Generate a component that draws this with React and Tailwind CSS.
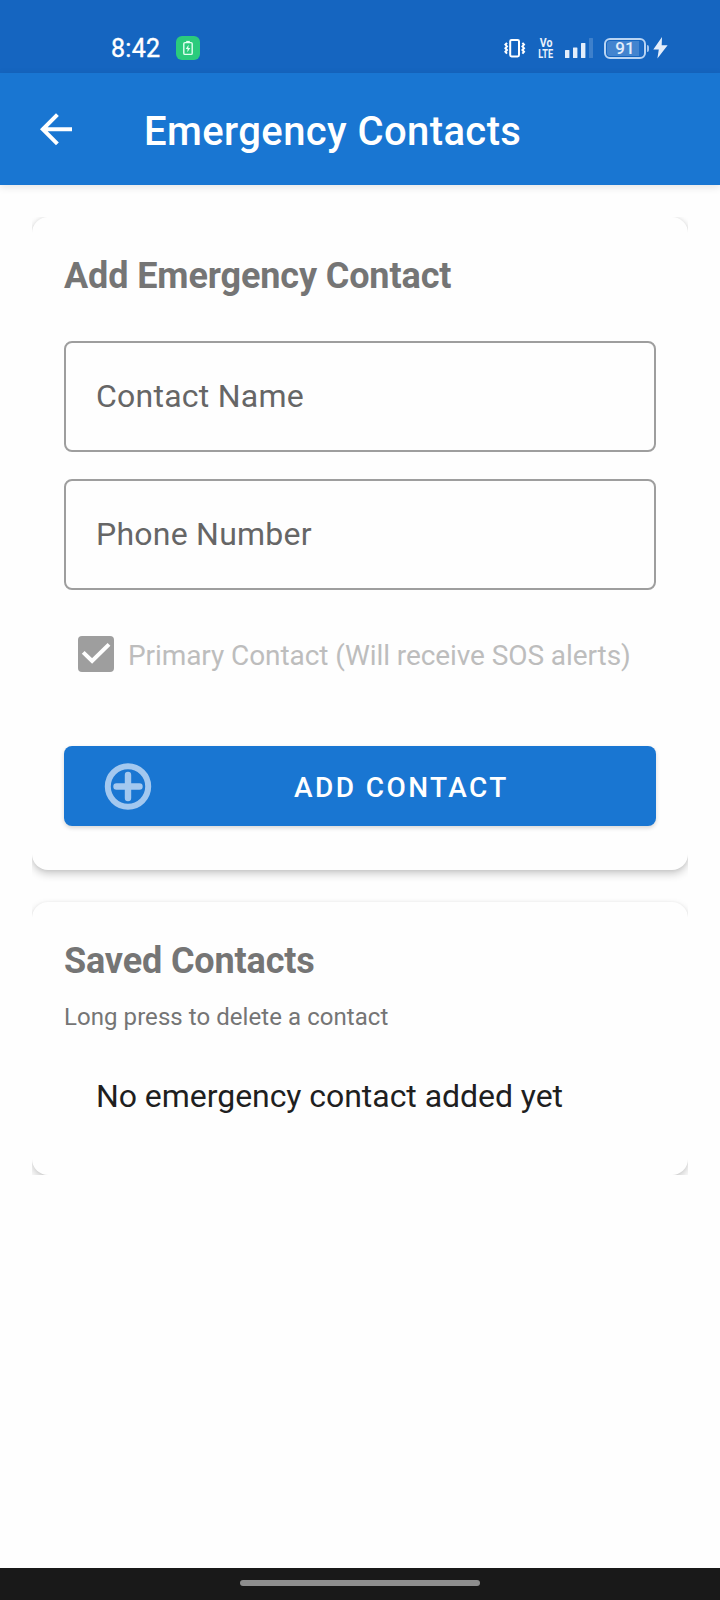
function VibrateIcon() {
  return (
    <svg className="h-5 w-[22px] shrink-0" viewBox="0 0 22 20" fill="none" stroke="#fff">
      <rect x="6.2" y="1.9" width="8.8" height="16.6" rx="1.4" strokeWidth="2" />
      <path d="M3 4.8L1.4 6.6 3 8.4 1.4 10.2 3 12l-1.6 1.8L3 15.6" strokeWidth="2" />
      <path d="M18.4 4.8L20 6.6 18.4 8.4 20 10.2 18.4 12l1.6 1.8-1.6 1.8" strokeWidth="2" />
    </svg>
  );
}

function SignalIcon() {
  return (
    <svg className="h-5 w-7 shrink-0" viewBox="0 0 28 20" fill="#e4eefb">
      <rect x="0" y="12" width="4.4" height="8" rx="0.5" />
      <rect x="8" y="9.6" width="4.4" height="10.4" rx="0.5" />
      <rect x="16" y="5" width="4.4" height="15" rx="0.5" />
      <rect x="24" y="0" width="4" height="20" rx="0.5" fillOpacity="0.2" />
    </svg>
  );
}

function StatusBar() {
  return (
    <div className="flex h-[73px] items-start bg-[#1565c0] pt-9 pr-[52px] pl-[111px]">
      <span className="w-[65px] pt-px text-[25px] leading-6 tracking-[0.3px] text-white [-webkit-text-stroke:0.4px_#fff]">
        8:42
      </span>
      <span className="flex h-6 w-6 items-center justify-center rounded-[6px] bg-[#2bcb7c]">
        <svg className="h-4 w-3" viewBox="0 0 12 16" fill="none" stroke="#e3fff0">
          <rect x="1.8" y="2.6" width="8.4" height="11.8" rx="1.2" strokeWidth="1.4" />
          <path d="M4.2 1.6h3.6" strokeWidth="1.4" />
          <path d="M6.6 4.8L3.7 9h1.9l-.3 3.2L8.3 8H6.3z" fill="#e3fff0" stroke="none" />
        </svg>
      </span>
      <div className="ml-auto flex h-6 items-center">
        <VibrateIcon />
        <span className="ml-3 flex w-4 flex-col items-center pt-px text-[12px] leading-[10.5px] font-bold text-[#eaf2fc]">
          <span className="scale-x-[0.88]">Vo</span>
          <span className="scale-x-[0.76]">LTE</span>
        </span>
        <div className="ml-[11px]">
          <SignalIcon />
        </div>
        <span className="ml-[11px] flex h-[21px] w-[42px] items-center justify-center rounded-[6px] border-2 border-[#b9d4f3] p-[1px]">
          <span className="flex h-full w-full items-center justify-center rounded-[3px] bg-linear-to-r from-[#4384cf] from-90% to-[#1f6bc4] to-90% text-[17px] leading-none font-medium text-[#e4eefb]">
            91
          </span>
        </span>
        <span className="ml-px h-[7px] w-[2px] rounded-r-sm bg-[#a3c5ee]" />
        <svg className="ml-1 h-[22px] w-[15px]" viewBox="0 0 15 22" fill="#e4eefb">
          <path d="M9 0L.3 12.4h5.5l-1.4 9L14.6 8.2H8.7z" />
        </svg>
      </div>
    </div>
  );
}

function Toolbar() {
  return (
    <header className="relative z-10 flex h-28 items-center bg-[#1976d2] pl-8 shadow-[0_2px_8px_rgba(0,0,0,0.11)]">
      <svg className="h-12 w-12" viewBox="0 0 24 24" fill="#fff">
        <path d="M20 11.1H7.83l5.59-5.59L12 4.1l-8 8 8 8 1.41-1.41L7.83 13.1H20v-2z" />
      </svg>
      <h1 className="ml-16 pt-[5px] text-[40px] leading-[48px] font-medium tracking-[0.4px] text-white">
        Emergency Contacts
      </h1>
    </header>
  );
}

function Field({ label }) {
  return (
    <div className="flex h-[111px] items-center rounded-lg border-2 border-[#9e9e9e] px-[30px] pb-[2px] text-[32px] leading-[38px] tracking-[0.24px] text-[#666]">
      {label}
    </div>
  );
}

function Card({ className, children }) {
  return <section className={`flex flex-col rounded-2xl bg-[#fefefe] px-8 ${className}`}>{children}</section>;
}

export default function App() {
  return (
    <div className="flex h-[1600px] w-[720px] flex-col bg-[#fefefe] font-[Roboto,sans-serif]">
      <StatusBar />
      <Toolbar />
      <main className="flex-1 px-8 pt-8">
        <div className="flex flex-col gap-8 overflow-hidden">
          <Card className="h-[653px] pt-[38px] shadow-[0_4px_8px_rgba(0,0,0,0.2),0_0_4px_rgba(0,0,0,0.09)]">
            <h2 className="text-[36px] leading-[42px] font-bold tracking-[-0.12px] text-[#757575]">
              Add Emergency Contact
            </h2>
            <div className="mt-11 flex flex-col gap-[27px]">
              <Field label="Contact Name" />
              <Field label="Phone Number" />
            </div>
            <div className="mt-[46px] flex h-9 items-center pl-[14px]">
              <span className="flex h-9 w-9 items-center justify-center rounded-[4px] bg-[#9e9e9e]">
                <svg className="h-9 w-9" viewBox="0 0 36 36" fill="none" stroke="#fff" strokeWidth="4">
                  <path d="M5.2 16.4l8.9 8.6L31 8.4" />
                </svg>
              </span>
              <span className="ml-[14px] pt-[3px] text-[28px] leading-8 tracking-[-0.08px] whitespace-nowrap text-[#bdbdbd]">
                Primary Contact (Will receive SOS alerts)
              </span>
            </div>
            <button className="mt-[74px] flex h-20 items-center rounded-lg bg-[#1976d2] pl-10 shadow-[0_2px_4px_rgba(0,0,0,0.16)]">
              <svg className="h-12 w-12" viewBox="0 0 48 48" fill="none" stroke="#a3c8ef">
                <circle cx="24" cy="24.5" r="20.2" strokeWidth="6" />
                <path d="M24 13v23M12.5 24.5h23" strokeWidth="6.4" strokeLinecap="round" />
              </svg>
              <span className="ml-[142px] pt-[4px] text-[28px] leading-8 font-medium tracking-[2.42px] text-white">
                ADD CONTACT
              </span>
            </button>
          </Card>
          <Card className="h-[273px] pt-[38px] shadow-[0_4px_8px_rgba(0,0,0,0.2),0_0_3px_rgba(0,0,0,0.05)]">
            <h2 className="text-[36px] leading-[42px] font-bold tracking-[-0.15px] text-[#757575]">Saved Contacts</h2>
            <p className="mt-[21px] text-[24px] leading-7 tracking-[0.06px] text-[#757575]">
              Long press to delete a contact
            </p>
            <p className="mt-[46px] pl-8 text-[32px] leading-[38px] tracking-[-0.05px] text-[#1f1f1f]">
              No emergency contact added yet
            </p>
          </Card>
        </div>
      </main>
      <footer className="flex h-8 items-center justify-center bg-[#191919] pb-[2px]">
        <span className="h-[6px] w-60 rounded-full bg-[#8e8e8e]" />
      </footer>
    </div>
  );
}
